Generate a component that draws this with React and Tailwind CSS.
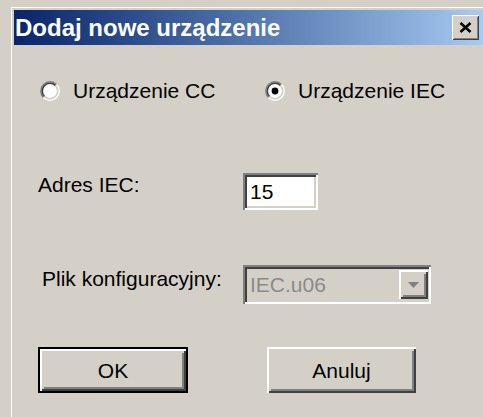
import React from "react";

// Classic 3D bevels for the Windows 2000 look
const raised =
  "shadow-[inset_2px_2px_0_#ffffff,inset_-2px_-2px_0_#404040,inset_4px_4px_0_#d4d0c8,inset_-4px_-4px_0_#808080]";
const sunken =
  "shadow-[inset_2px_2px_0_#808080,inset_-2px_-2px_0_#ffffff,inset_4px_4px_0_#404040,inset_-4px_-4px_0_#d4d0c8]";

function Radio({ checked }) {
  return (
    <svg width="20" height="20" viewBox="0 0 20 20" className="shrink-0">
      <circle cx="10" cy="10" r="7.2" fill="#ffffff" />
      <path d="M3.46 16.54 A9.25 9.25 0 0 1 16.54 3.46" fill="none" stroke="#808080" strokeWidth="1.5" />
      <path d="M16.54 3.46 A9.25 9.25 0 0 1 3.46 16.54" fill="none" stroke="#ffffff" strokeWidth="1.5" />
      <path d="M4.52 15.48 A7.75 7.75 0 0 1 15.48 4.52" fill="none" stroke="#404040" strokeWidth="1.5" />
      <path d="M15.48 4.52 A7.75 7.75 0 0 1 4.52 15.48" fill="none" stroke="#d4d0c8" strokeWidth="1.5" />
      {checked && <circle cx="10" cy="10" r="3.4" fill="#000000" />}
    </svg>
  );
}

function CloseButton() {
  return (
    <div className="ml-auto flex h-[25px] w-[27px] items-center justify-center bg-[#d4d0c8] shadow-[inset_1px_1px_0_#ffffff,inset_-1px_-1px_0_#404040,inset_2px_2px_0_#d4d0c8,inset_-2px_-2px_0_#808080]">
      <svg width="13" height="11" viewBox="0 0 13 11">
        <path d="M1.5 1 L11.5 10 M11.5 1 L1.5 10" stroke="#000000" strokeWidth="2.6" />
      </svg>
    </div>
  );
}

export default function App() {
  return (
    <div className="h-[417px] w-[483px] overflow-hidden bg-[#d4d0c8] font-['Liberation_Sans',Arial,sans-serif] text-[21px] text-black">
      <div className="ml-[11px] mt-[7px] h-full border-l border-t border-white pl-[2px] pt-[2px]">
        {/* caption */}
        <div className="flex h-[35px] items-center bg-gradient-to-r from-[#0a246a] to-[#a6caf0] pr-[4px]">
          <span className="pl-[1px] text-[24px] font-bold leading-none text-white">Dodaj nowe urządzenie</span>
          <CloseButton />
        </div>

        {/* device type */}
        <div className="mt-[36px] flex h-[20px] items-center leading-[20px]">
          <div className="ml-[26px] flex w-[225px] items-center gap-[13px]">
            <Radio checked={false} />
            <span>Urządzenie CC</span>
          </div>
          <div className="flex items-center gap-[13px]">
            <Radio checked={true} />
            <span>Urządzenie IEC</span>
          </div>
        </div>

        {/* address */}
        <div className="mt-[72px] flex items-start">
          <div className="ml-[24px] mt-[2px] w-[205px] leading-[20px]">Adres IEC:</div>
          <div className={`flex h-[37px] w-[75px] items-center bg-white pl-[7px] leading-none ${sunken}`}>15</div>
        </div>

        {/* configuration file */}
        <div className="mt-[55px] flex items-start">
          <div className="ml-[28px] mt-[4px] w-[201px] leading-[20px]">Plik konfiguracyjny:</div>
          <div className={`flex h-[39px] w-[188px] items-center bg-[#d4d0c8] pl-[7px] pr-[3px] leading-none ${sunken}`}>
            <span className="text-[#8a8a8a]">IEC.u06</span>
            <div className={`ml-auto flex h-[29px] w-[29px] items-center justify-center ${raised}`}>
              <svg width="13" height="8" viewBox="0 0 13 8">
                <path d="M1 1 L12 1 L6.5 7 Z" fill="#808080" />
              </svg>
            </div>
          </div>
        </div>

        {/* actions */}
        <div className="mt-[43px] flex items-start">
          <div className="ml-[24px] flex h-[46px] w-[150px] items-center justify-center border-2 border-black">
            <div className={`flex h-full w-full items-center justify-center leading-none ${raised}`}>OK</div>
          </div>
          <div className={`ml-[79px] flex h-[46px] w-[149px] items-center justify-center leading-none ${raised}`}>Anuluj</div>
        </div>
      </div>
    </div>
  );
}
